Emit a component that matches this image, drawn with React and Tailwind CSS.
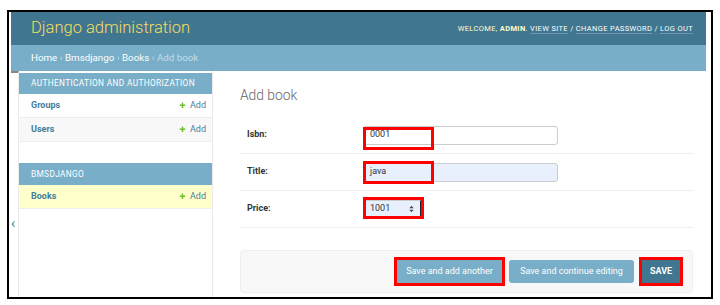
import React from 'react';

function AddIcon() {
  return (
    <svg viewBox="0 0 1792 1792" className="w-[7px] h-[7px]">
      <path
        fill="#70bf2b"
        d="M1600 736v192q0 40-28 68t-68 28h-416v416q0 40-28 68t-68 28h-192q-40 0-68-28t-28-68v-416h-416q-40 0-68-28t-28-68v-192q0-40 28-68t68-28h416v-416q0-40 28-68t68-28h192q40 0 68 28t28 68v416h416q40 0 68 28t28 68z"
      />
    </svg>
  );
}

function ModelRow({ name, current, alt }) {
  return (
    <div
      className={`h-[24px] flex items-center justify-between pl-[12px] pr-[6px] border-b border-[#eee] text-[9px] ${
        current ? 'bg-[#ffc]' : alt ? 'bg-[#f8f8f8]' : 'bg-white'
      }`}
    >
      <span className="font-bold text-[#447e9b]">{name}</span>
      <span className="flex items-center gap-[4px] text-[#447e9b]">
        <AddIcon />
        Add
      </span>
    </div>
  );
}

function Caption({ children, h }) {
  return (
    <div className={`${h} flex items-center pl-[12px] bg-[#79aec8] text-white uppercase text-[8.3px] tracking-[0.35px]`}>
      {children}
    </div>
  );
}

function FormRow({ label, children }) {
  return (
    <div className="h-[37px] flex items-center pl-[7px] border-b border-[#eee]">
      <label className="w-[116px] text-[9px] font-bold text-[#333]">{label}</label>
      {children}
    </div>
  );
}

function Marker({ className }) {
  return <span className={`absolute left-0 border-[3px] border-[#f00] ${className}`} />;
}

export default function App() {
  return (
    <div className="w-[720px] h-[305px] bg-white pt-[10px] pl-[7px] font-['Roboto',sans-serif]">
      <div className="w-[706px] h-[289px] border-2 border-black pl-[2px] pr-[5px] overflow-hidden flex flex-col">
        {/* header */}
        <div className="h-[33px] shrink-0 bg-[#417690] flex items-center justify-between pl-[20px] pr-[13px]">
          <span className="text-[16.5px] font-light text-[#f5dd5d]">Django administration</span>
          <span className="text-[7.5px] tracking-[0.35px] uppercase text-[#ffc]">
            Welcome, <b className="font-bold">admin</b>.{' '}
            <span className="text-white border-b border-white/25">View site</span> /{' '}
            <span className="text-white border-b border-white/25">Change password</span> /{' '}
            <span className="text-white border-b border-white/25">Log out</span>
          </span>
        </div>

        {/* breadcrumbs */}
        <div className="h-[26px] shrink-0 bg-[#79aec8] flex items-center pl-[20px] text-[9.75px] text-[#c4dce8]">
          <span className="text-white">Home</span>&nbsp;›&nbsp;
          <span className="text-white">Bmsdjango</span>&nbsp;›&nbsp;
          <span className="text-white">Books</span>&nbsp;›&nbsp;Add book
        </div>

        <div className="flex flex-1 min-h-0">
          {/* sidebar toggle */}
          <div className="w-[8px] shrink-0 border-t-2 border-t-[#888] border-r border-r-[#eaeaea] pt-[143px] text-[14px] leading-none text-[#447e9b]">
            ‹
          </div>

          {/* sidebar */}
          <div className="w-[194px] shrink-0 border-r border-[#eaeaea] pt-[2px]">
            <Caption h="h-[21px]">Authentication and Authorization</Caption>
            <ModelRow name="Groups" />
            <ModelRow name="Users" alt />
            <div className="h-[21px]" />
            <Caption h="h-[22px]">Bmsdjango</Caption>
            <ModelRow name="Books" current />
          </div>

          {/* content */}
          <div className="flex-1 pl-[27px] pr-[13px] pt-[15px]">
            <h1 className="text-[13.8px] leading-[18px] font-light text-[#666] mb-[13px]">Add book</h1>

            <FormRow label="Isbn:">
              <div className="relative">
                <div className="w-[195px] h-[19px] border border-[#ccc] rounded-[3px] bg-white flex items-center px-[6px] text-[9px] text-[#333]">
                  0001
                </div>
                <Marker className="top-[1px] w-[71px] h-[23px]" />
              </div>
            </FormRow>

            <FormRow label="Title:">
              <div className="relative">
                <div className="w-[195px] h-[19px] border border-[#ccc] rounded-[3px] bg-[#e8f0fe] flex items-center px-[6px] text-[9px] text-[#333]">
                  java
                </div>
                <Marker className="top-[-2px] w-[71px] h-[23px]" />
              </div>
            </FormRow>

            <FormRow label="Price:">
              <div className="relative">
                <div className="w-[58px] h-[19px] border border-[#ccc] border-r-[#222] bg-[#e8f0fe] flex items-center justify-between pl-[6px] pr-[6px] text-[9px] text-[#333]">
                  1001
                  <svg viewBox="0 0 6 9" className="w-[5px] h-[8px]">
                    <path d="M3 0.5L5.5 3.5H0.5Z M3 8.5L0.5 5.5H5.5Z" fill="#444" />
                  </svg>
                </div>
                <Marker className="top-[-3px] w-[61px] h-[22px]" />
              </div>
            </FormRow>

            {/* submit row */}
            <div className="mt-[22px] h-[43px] bg-[#f8f8f8] border border-[#eee] rounded-[4px] flex items-center justify-end pr-[9px] text-[9px] text-white">
              <span className="border-[3px] border-[#f00]">
                <span className="w-[105px] h-[23px] bg-[#79aec8] flex items-center justify-center">
                  Save and add another
                </span>
              </span>
              <span className="ml-[4px] w-[125px] h-[23px] rounded-[3px] bg-[#79aec8] flex items-center justify-center">
                Save and continue editing
              </span>
              <span className="ml-[5px] border-[3px] border-[#f00]">
                <span className="w-[38px] h-[23px] bg-[#417690] font-bold uppercase flex items-center justify-center">
                  Save
                </span>
              </span>
            </div>
          </div>
        </div>
      </div>
    </div>
  );
}
